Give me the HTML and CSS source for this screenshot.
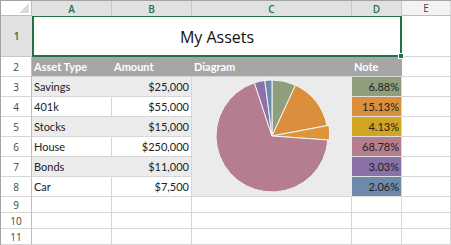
FILE: index.html
```html
<!DOCTYPE html>
<html>
<head>
<meta charset="utf-8">
<link rel="stylesheet" href="styles.css">
</head>
<body>
<div class="sheet">
  <div class="corner"><span class="tri"></span></div>
  <div class="ch sel">A</div>
  <div class="ch sel">B</div>
  <div class="ch sel">C</div>
  <div class="ch sel">D</div>
  <div class="ch">E</div>

  <div class="rh rsel">1</div>
  <div class="title">My Assets<span class="handle"></span></div>
  <div class="c"></div>

  <div class="rh">2</div>
  <div class="th">Asset Type</div>
  <div class="th">Amount</div>
  <div class="th">Diagram</div>
  <div class="th">Note</div>
  <div class="c"></div>

  <div class="rh">3</div>
  <div class="c band">Savings</div>
  <div class="c band num">$25,000</div>
  <div class="chart">
    <svg width="160" height="120" viewBox="0 0 160 120">
      <g stroke="#f4f4f4" stroke-width="1" stroke-linejoin="round">
        <path d="M80 59 L80 3 A56 56 0 0 1 103.46 8.15 Z" fill="#8f9f7e"/>
        <path d="M80 59 L103.46 8.15 A56 56 0 0 1 135.01 48.55 Z" fill="#db8f3d"/>
        <path d="M80 59 L137 48.3 A57.5 57.5 0 0 1 137.4 63.1 Z" fill="#de943b"/>
        <path d="M80 59 L135.86 63 A56 56 0 1 1 62.43 5.83 Z" fill="#b57e8f"/>
        <path d="M80 59 L62.43 5.83 A56 56 0 0 1 72.81 3.46 Z" fill="#8a72a9"/>
        <path d="M80 59 L72.81 3.46 A56 56 0 0 1 80 3 Z" fill="#6f89ab"/>
      </g>
    </svg>
  </div>
  <div class="c note n1">6.88%</div>
  <div class="c"></div>

  <div class="rh">4</div>
  <div class="c">401k</div>
  <div class="c num">$55,000</div>
  <div class="c note n2">15.13%</div>
  <div class="c"></div>

  <div class="rh">5</div>
  <div class="c band">Stocks</div>
  <div class="c band num">$15,000</div>
  <div class="c note n3">4.13%</div>
  <div class="c"></div>

  <div class="rh">6</div>
  <div class="c">House</div>
  <div class="c num">$250,000</div>
  <div class="c note n4">68.78%</div>
  <div class="c"></div>

  <div class="rh">7</div>
  <div class="c band">Bonds</div>
  <div class="c band num">$11,000</div>
  <div class="c note n5">3.03%</div>
  <div class="c"></div>

  <div class="rh">8</div>
  <div class="c">Car</div>
  <div class="c num">$7,500</div>
  <div class="c note n6">2.06%</div>
  <div class="c"></div>

  <div class="rh">9</div>
  <div class="c"></div><div class="c"></div><div class="c"></div><div class="c"></div><div class="c"></div>
  <div class="rh">10</div>
  <div class="c"></div><div class="c"></div><div class="c"></div><div class="c"></div><div class="c"></div>
  <div class="rh">11</div>
  <div class="c"></div><div class="c"></div><div class="c"></div><div class="c"></div><div class="c"></div>
</div>
</body>
</html>
```

FILE: styles.css
```css
* { box-sizing: border-box; }
html, body { margin: 0; padding: 0; background: #fff; }
body { width: 451px; height: 245px; overflow: hidden; }

.sheet {
  display: grid;
  grid-template-columns: 31px 80px 80px 160px 50px 49px;
  grid-template-rows: 15px 41px 20px 20px 20px 20px 20px 20px 20px 16px 16px 16px;
  border-top: 1px solid #a3a3a3;
  border-left: 1px solid #a3a3a3;
  width: 451px;
  height: 245px;
  font-family: Lato, "Liberation Sans", sans-serif;
  font-size: 11px;
  color: #222;
}

.corner {
  position: relative;
  background: #fff;
  border-right: 1px solid #bdbdbd;
  border-bottom: 1px solid #bdbdbd;
}
.tri {
  position: absolute;
  right: 2px;
  bottom: 2px;
  width: 0;
  height: 0;
  border-left: 10px solid transparent;
  border-bottom: 10px solid #dadada;
}

.ch {
  display: flex;
  align-items: center;
  justify-content: center;
  background: #f3f3f3;
  border-right: 1px solid #d6d6d6;
  border-bottom: 1px solid #bdbdbd;
  font-family: "Open Sans", "Noto Sans", sans-serif;
  font-size: 10px;
  color: #444;
}
.ch.sel {
  background: #e1e1e1;
  color: #217346;
  font-weight: 600;
  border-right-color: #c8c8c8;
  border-bottom: none;
}

.rh {
  display: flex;
  align-items: center;
  justify-content: center;
  background: #fff;
  border-right: 1px solid #bdbdbd;
  border-bottom: 1px solid #d6d6d6;
  font-family: "Open Sans", "Noto Sans", sans-serif;
  font-size: 10px;
  color: #444;
}
.rh.rsel {
  background: #e1e1e1;
  color: #217346;
  font-weight: 600;
  border-right: none;
  border-bottom-color: #c8c8c8;
}

.title {
  grid-column: span 4;
  position: relative;
  display: flex;
  align-items: center;
  justify-content: center;
  background: #fff;
  border: 2px solid #217346;
  border-top-width: 1px;
  font-family: "Open Sans", "Noto Sans", sans-serif;
  font-size: 16px;
  color: #111;
  padding-top: 1px;
}
.handle {
  position: absolute;
  right: -4px;
  bottom: -4px;
  width: 6px;
  height: 6px;
  background: #217346;
  border: 1px solid #fff;
}

.c {
  display: flex;
  align-items: center;
  padding: 0 2px;
  border-right: 1px solid #d6d6d6;
  border-bottom: 1px solid #d6d6d6;
  white-space: nowrap;
}
.c.num { justify-content: flex-end; }
.c.band { background: #ececec; border-right-color: #ececec; }
.c.band + .c.band.num { border-right-color: #d6d6d6; }

.th {
  display: flex;
  align-items: center;
  padding: 0 2px;
  background: #a6a6a6;
  color: #fff;
  font-weight: 700;
  border-bottom: 1px solid #d6d6d6;
}

.chart {
  grid-row: span 6;
  background: #ebebeb;
  border-bottom: 1px solid #d6d6d6;
}
.chart svg { display: block; }

.note {
  justify-content: flex-end;
  color: #222;
  border-right-color: #d6d6d6;
  border-bottom-color: #e0e0e0;
}
.n1 { background: #8f9f7e; }
.n2 { background: #db8f3d; }
.n3 { background: #cfa522; }
.n4 { background: #b57e8f; }
.n5 { background: #8a72a9; }
.n6 { background: #6f89ab; }
```
